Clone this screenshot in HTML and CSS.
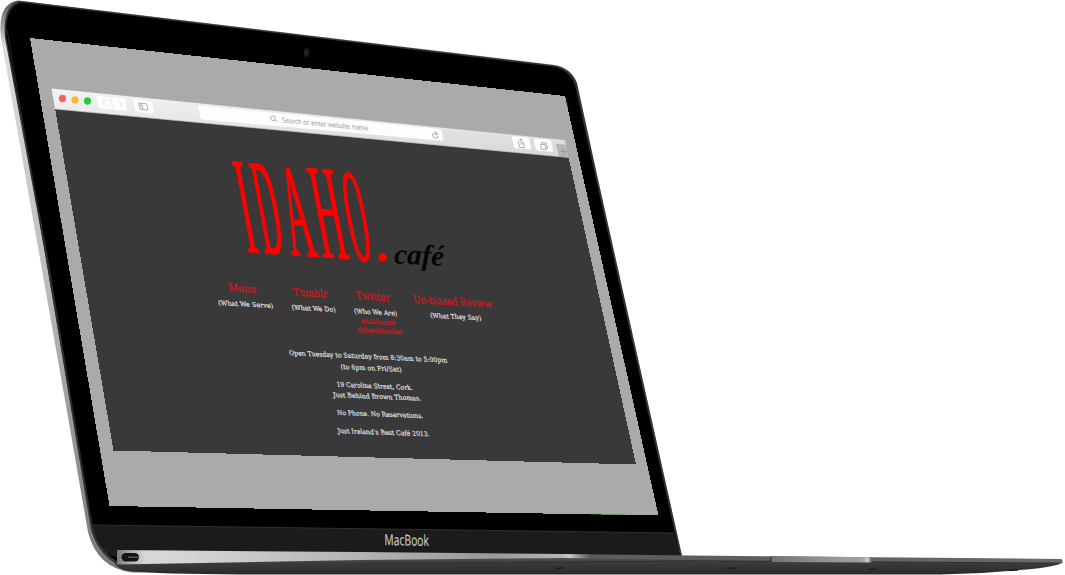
FILE: index.html
```
<!DOCTYPE html>
<html lang="en">
<head>
<meta charset="utf-8">
<title>Idaho Café</title>
<link rel="stylesheet" href="styles.css">
</head>
<body>
<main class="stage">
<svg class="laptop" viewBox="0 0 1065 575" width="1065" height="575" role="img" aria-label="Idaho Café website on a MacBook">
  <defs>
    <linearGradient id="rim" x1="0" y1="0" x2="0" y2="1"><stop offset="0" stop-color="#555"/><stop offset=".08" stop-color="#ddd"/><stop offset=".5" stop-color="#bbb"/><stop offset="1" stop-color="#777"/></linearGradient>
    <linearGradient id="bar" x1="0" y1="0" x2=".1" y2="1"><stop offset="0" stop-color="#f3f3f3"/><stop offset="1" stop-color="#dadada"/></linearGradient>
    <linearGradient id="deck" gradientUnits="userSpaceOnUse" x1="117" y1="0" x2="1063" y2="0"><stop offset="0" stop-color="#777"/><stop offset=".012" stop-color="#aaa"/><stop offset=".03" stop-color="#d8d8d8"/><stop offset=".08" stop-color="#d4d4d4"/><stop offset=".25" stop-color="#b4b4b4"/><stop offset=".4" stop-color="#999"/><stop offset=".47" stop-color="#b5b5b5"/><stop offset=".478" stop-color="#c8c8c8"/><stop offset=".5" stop-color="#5c5c5c"/><stop offset=".69" stop-color="#5d5e5d"/><stop offset="1" stop-color="#6a6c6a"/></linearGradient>
    <linearGradient id="under" x1="0" y1="0" x2="0" y2="1"><stop offset="0" stop-color="#555"/><stop offset=".35" stop-color="#3b3b3a"/><stop offset="1" stop-color="#292928"/></linearGradient>
    <linearGradient id="notch" x1="0" y1="0" x2="1" y2="0"><stop offset="0" stop-color="#737473"/><stop offset=".5" stop-color="#92938f"/><stop offset=".9" stop-color="#a1a19d"/><stop offset=".96" stop-color="#ccc"/><stop offset="1" stop-color="#555"/></linearGradient>
    <filter id="stems" filterUnits="userSpaceOnUse" x="220" y="150" width="170" height="125"><feOffset in="SourceGraphic" dx="1" dy="0" result="wide"/><feMerge><feMergeNode in="wide"/><feMergeNode in="SourceGraphic"/></feMerge></filter>
  </defs>

  <!-- lid -->
  <path fill="url(#rim)" d="M18 .5 553 64.500Q571 67 577 83L597 175 682 556 200 572.500H132Q97 568 88 532L65 400 1 38Q-3 4 18 .5Z"/>
  <path fill="#343434" d="M20 1 553 65Q571 67.500 577 83L597 175 682 556 140 571Q102 567 91 530L46 258 5 38Q2 5 20 1Z"/>
  <path d="M21 2.500 552 66.500Q569 69 575 85L595 175 680 556 140 570Q106 565 93 529L48 258 6.500 38Q4 7 21 2.500Z"/>
  <path fill="#1b1b1b" d="M92 525 674 533 680 556H118Q98 554 92 525Z"/>
  <path class="edge" d="M7 30 92 525Q99 554 118 557"/>
  <path stroke="#303030" fill="none" d="M92 525 674 533"/>
  <ellipse cx="306.500" cy="52.500" rx="3" ry="4.500" fill="#18181b"/><circle cx="306" cy="52.500" r="1.500" fill="#202d48"/>

  <!-- display -->
  <path fill="#aaa" shape-rendering="crispEdges" d="M30 38 565 96 658.500 515.500 109.500 506Z"/>
  <path fill="none" stroke="#347a24" stroke-width=".6" d="M590 514.200 625 514.800"/>
  <path fill="none" stroke="#a34035" stroke-width=".6" d="M565.500 97 568 108"/>
  <path fill="#393939" shape-rendering="crispEdges" d="M55 108 568.500 157 636 464.500 113.500 450.500Z"/>
  <path fill="url(#bar)" d="M51.500 88.500 565 140 569 157.500 55 109Z"/>
  <path fill="none" stroke="#c7bfbf" stroke-width=".7" d="M55 109 569 157.500"/>

  <!-- browser controls -->
  <ellipse cx="62.500" cy="98.500" rx="3.600" ry="3.700" fill="#fc605b"/>
  <ellipse cx="75" cy="100" rx="3.600" ry="3.700" fill="#fdbc2e"/>
  <ellipse cx="87.500" cy="101" rx="3.600" ry="3.700" fill="#27cb40"/>
  <g class="buttons">
    <path d="M98 96 108.500 97Q110 97.200 110.300 98.500L112 108.500Q112 109.500 111 109.400L100 108.400Q98.500 108 98.200 106.500L96.500 97.500Q96.500 96 98 96Z"/>
    <path d="M113 97.500 123.500 98.500Q125 98.700 125.300 100L127 110Q127 111 126 110.900L115 109.900Q113.500 109.500 113.200 108L111.500 99Q111.500 97.500 113 97.500Z"/>
    <path d="M134 99.300 150 100.900Q151.700 101.200 152 102.500L154 112Q154 113.500 152.500 113.300L137 111.900Q135.200 111.500 134.900 110L132.800 101Q132.500 99.300 134 99.300Z"/>
    <path d="M199 105.500 439 128.800Q441 129 441.500 131L443.300 139Q443.500 141 442 140.800L203 119.500Q200.800 119.300 200.300 117L198 107Q197.500 105.300 199 105.500Z"/>
    <path d="M513 136 527 137.400Q529 137.600 529.300 139L531 148Q531 149.600 529.500 149.500L516 148.300Q514 148 513.700 146.500L511.700 137.500Q511.500 135.900 513 136Z"/>
    <path d="M535 138.400 549 139.800Q551 140 551.300 141.400L553 150.300Q553 151.900 551.500 151.800L538 150.600Q536 150.300 535.700 148.800L533.700 139.800Q533.500 138.300 535 138.400Z"/>
  </g>
  <path fill="#b8b8b8" stroke="#a0a0a0" stroke-width=".7" d="M556.500 144.500 567 145.500 569 157 559.500 156Z"/>
  <path stroke="#999" d="M560 151 567 151.700M563 148 564.300 155"/>
  <g class="faint"><path d="M106 99.500 102.500 102.300 107 106"/><path d="M118 100.700 122.500 104 119.500 107"/></g>
  <g class="icons">
    <path d="M138.500 103 146.500 103.800 148 110 140 109.300ZM141.500 103.300 143 109.600M139.800 105.200 141 105.400M140.200 107 141.400 107.200"/>
    <circle cx="273" cy="118.300" r="2.300"/><path d="M274.800 120 277.200 122.500"/>
    <path d="M437.500 134Q434 131.500 432.600 134 432.200 137.500 435.500 138.300 438.500 138.200 438 135.500M435.500 131.500 437.700 134 434.800 134.800"/>
    <path d="M519.500 142 518.300 142 519.500 147.300 524.500 147.800 523.300 142.400 522.200 142.300M521.800 145 520.500 139M518.800 140.500 520.500 138.800 522.600 140.800"/>
    <path d="M540.500 144.200 545 144.600 546 149.700 541.500 149.300ZM542 144 541.800 142.500 546.200 143 547.500 148.300 546 148.200"/>
  </g>
  <text class="search" transform="matrix(1 .095 .16 1 282.500 122.500)" textLength="86" lengthAdjust="spacingAndGlyphs">Search or enter website name</text>

  <!-- page heading -->
  <g class="brand" filter="url(#stems)">
    <text transform="matrix(.37 .026 .264 1.39 247.300 252.300)">I</text>
    <text transform="matrix(.305 .021 .258 1.38 264.300 253.500)">D</text>
    <text transform="matrix(.37 .026 .264 1.34 291.500 255.200)">A</text>
    <text transform="matrix(.39 .027 .264 1.37 322 257.500)">H</text>
    <text transform="matrix(.28 .020 .25 1.34 354 260.300)">O</text>
  </g>
  <ellipse cx="382.700" cy="257.300" rx="4.100" ry="4.300" fill="#f00"/>
  <text class="cafe" transform="matrix(1 .045 -.02 1 394 263.500)" textLength="50" lengthAdjust="spacingAndGlyphs">café</text>

  <!-- navigation -->
  <g class="nav">
    <text transform="matrix(1 .055 .18 1 229 291.200)" textLength="28" lengthAdjust="spacingAndGlyphs">Menu</text>
    <text transform="matrix(1 .055 .18 1 293.500 295.500)" textLength="34.500" lengthAdjust="spacingAndGlyphs">Tumblr</text>
    <text transform="matrix(1 .055 .18 1 356.500 299.300)" textLength="34" lengthAdjust="spacingAndGlyphs">Twitter</text>
    <text transform="matrix(1 .055 .18 1 414 303)" textLength="78" lengthAdjust="spacingAndGlyphs">Un-biased Review</text>
  </g>
  <g class="copy">
    <text transform="matrix(1 .055 .18 1 218.500 305)" textLength="55" lengthAdjust="spacingAndGlyphs">(What We Serve)</text>
    <text transform="matrix(1 .055 .18 1 292 309.500)" textLength="44" lengthAdjust="spacingAndGlyphs">(What We Do)</text>
    <text transform="matrix(1 .055 .18 1 354.500 313.300)" textLength="43" lengthAdjust="spacingAndGlyphs">(Who We Are)</text>
    <text transform="matrix(1 .055 .18 1 430.500 317.500)" textLength="51" lengthAdjust="spacingAndGlyphs">(What They Say)</text>
    <text class="handle" transform="matrix(1 .05 .18 1 361 323.300)" textLength="34.500" lengthAdjust="spacingAndGlyphs">@idahocafe</text>
    <text class="handle" transform="matrix(1 .05 .18 1 357.500 332)" textLength="45" lengthAdjust="spacingAndGlyphs">@theidahochef</text>
    <text transform="matrix(1 .048 .18 1 289.500 355)" textLength="158" lengthAdjust="spacingAndGlyphs">Open Tuesday to Saturday from 8:30am to 5:00pm</text>
    <text transform="matrix(1 .045 .18 1 341 369)" textLength="61" lengthAdjust="spacingAndGlyphs">(to 6pm on Fri/Sat)</text>
    <text transform="matrix(1 .045 .18 1 337 386.500)" textLength="76" lengthAdjust="spacingAndGlyphs">19 Caroline Street, Cork.</text>
    <text transform="matrix(1 .04 .18 1 333.500 397)" textLength="88" lengthAdjust="spacingAndGlyphs">Just Behind Brown Thomas.</text>
    <text transform="matrix(1 .04 .18 1 337.500 414.700)" textLength="86" lengthAdjust="spacingAndGlyphs">No Phone. No Reservations.</text>
    <text transform="matrix(1 .036 .18 1 338 433)" textLength="92" lengthAdjust="spacingAndGlyphs">Just Ireland's Best Café 2013.</text>
  </g>

  <!-- base -->
  <path fill="url(#under)" d="M117 564 360 559 690 557 1063 562Q1058 567 1020 570 980 574 940 574.500H240Q160 574 128 571 118 569 114 563Z"/>
  <path stroke="#303030" fill="none" d="M360 564 690 561 1060 563"/>
  <path fill="url(#deck)" d="M117 550 360 552 565 554 690 555.500 1061 559Q1063 559 1062.500 562.500L690 560 565 558 360 560 117 564.500Z"/>
  <path fill="url(#notch)" d="M772 556 872 557.200V562.500L772 562Z"/>
  <path stroke="#333" d="M771 556V561.500"/>
  <rect x="121.500" y="553" width="17.500" height="8.500" rx="4.200" fill="#151515"/>
  <path stroke="#666" stroke-width="1.200" d="M128 557.200H138"/>
  <path stroke="#1e1e1e" stroke-width="1.500" d="M555 568.700 564 567.500M727 568.700 736 567.700M869 569.500 877 568.700M1009 570.500 1018 569.700"/>
  <text class="model" transform="matrix(1 .02 .02 1 384.500 545)" textLength="44.500" lengthAdjust="spacingAndGlyphs">MacBook</text>
</svg>
</main>
</body>
</html>
```
FILE: styles.css
```
body { margin: 0; background: #fff; overflow: hidden; }
.stage { width: 1065px; height: 575px; }
.laptop { display: block; }
.edge { fill: none; stroke: #292929; stroke-width: 1; }
.buttons { fill: #fdfdfd; }
.faint { fill: none; stroke: #ddd; stroke-width: .9; }
.icons { fill: none; stroke: #999; stroke-width: .8; }
.search { font: 7px "Open Sans", sans-serif; fill: #aaa; stroke: #aaa; stroke-width: .15; }
.brand { font: 100px "Liberation Serif", serif; fill: #f00; }
.cafe { font: italic bold 29px "Liberation Serif", serif; fill: #050505; }
.nav { font: 10.5px "DejaVu Serif", serif; fill: #d9141a; stroke: #d9141a; stroke-width: .25; }
.copy { font: 6.6px "DejaVu Serif", serif; fill: #dedede; stroke: #dedede; stroke-width: .22; }
.copy .handle { fill: #d9141a; stroke: #d9141a; }
.model { font: 15px "Open Sans", sans-serif; fill: #c6c6c6; stroke: #c6c6c6; stroke-width: .2; }
```
